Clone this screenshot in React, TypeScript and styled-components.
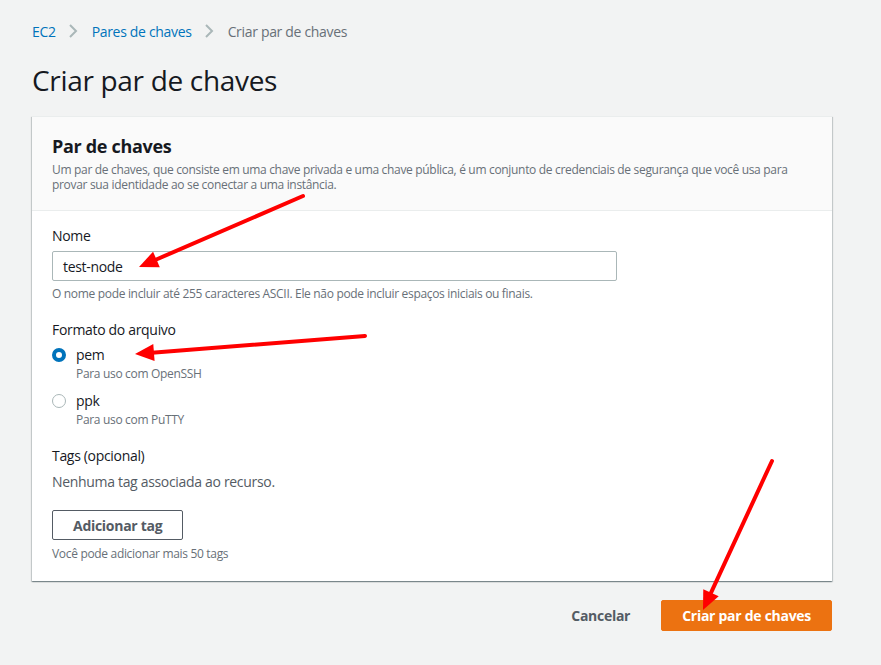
import React from "react";
import styled, { createGlobalStyle } from "styled-components";

const GlobalStyle = createGlobalStyle`
  html, body {
    margin: 0;
    padding: 0;
    background: #f2f3f3;
    font-family: "Open Sans", "Noto Sans", sans-serif;
    letter-spacing: -0.02em;
    color: #16191f;
  }
  * { box-sizing: border-box; }
  button { letter-spacing: -0.02em; }
`;

const Page = styled.div`
  position: relative;
  width: 881px;
  height: 665px;
  padding: 20px 49px 0 32px;
  overflow: hidden;
`;

const Breadcrumbs = styled.nav`
  display: flex;
  align-items: center;
  height: 22px;
  font-size: 14px;
`;

const Crumb = styled.span<{ $current?: boolean }>`
  color: ${(p) => (p.$current ? "#687078" : "#0073bb")};
`;

const Sep = styled.span`
  display: flex;
  align-items: center;
  margin: 0 14px 0 12px;
`;

const Title = styled.h1`
  margin: 20px 0 18px;
  font-size: 28px;
  line-height: 36px;
  font-weight: 400;
  color: #16191f;
`;

const Card = styled.section`
  background: #fff;
  border-top: 1px solid #eaeded;
  box-shadow: 0 1px 1px 0 rgba(0, 28, 36, 0.3), 1px 1px 1px 0 rgba(0, 28, 36, 0.15),
    -1px 1px 1px 0 rgba(0, 28, 36, 0.15);
`;

const CardHeader = styled.header`
  background: #fafafa;
  border-bottom: 1px solid #eaeded;
  padding: 18px 20px 18px;
`;

const CardTitle = styled.h2`
  margin: 0;
  font-size: 18px;
  line-height: 22px;
  font-weight: 700;
`;

const Description = styled.p`
  margin: 5px 0 0;
  font-size: 12px;
  line-height: 15px;
  color: #687078;
`;

const CardBody = styled.div`
  padding: 15px 20px 19px;
  display: flex;
  flex-direction: column;
`;

const Label = styled.div<{ $mt?: number }>`
  font-size: 14px;
  line-height: 20px;
  margin-top: ${(p) => p.$mt ?? 0}px;
`;

const Input = styled.div`
  margin-top: 5px;
  width: 565px;
  height: 30px;
  border: 1px solid #aab7b8;
  border-radius: 2px;
  padding: 0 10px;
  display: flex;
  align-items: center;
  font-size: 14px;
`;

const Hint = styled.div<{ $mt?: number }>`
  margin-top: ${(p) => p.$mt ?? 5}px;
  font-size: 12px;
  line-height: 16px;
  color: #687078;
`;

const RadioRow = styled.div<{ $mt: number }>`
  display: grid;
  grid-template-columns: 24px 1fr;
  margin-top: ${(p) => p.$mt}px;
`;

const RadioCircle = styled.span<{ $checked?: boolean }>`
  width: 14px;
  height: 14px;
  margin-top: 3px;
  border-radius: 50%;
  background: #fff;
  border: ${(p) => (p.$checked ? "4px solid #0073bb" : "1px solid #aab7b8")};
`;

const RadioText = styled.div`
  display: flex;
  flex-direction: column;
`;

const RadioLabel = styled.span`
  font-size: 14px;
  line-height: 20px;
`;

const RadioHint = styled.span`
  margin-top: 1px;
  font-size: 12px;
  line-height: 16px;
  color: #687078;
`;

const Muted = styled.div`
  margin-top: 6px;
  font-size: 14px;
  line-height: 20px;
  color: #545b64;
`;

const SecondaryButton = styled.button`
  align-self: flex-start;
  margin-top: 18px;
  height: 30px;
  padding: 0 20px;
  background: #fff;
  border: 1px solid #545b64;
  border-radius: 2px;
  color: #545b64;
  font-family: inherit;
  font-size: 14px;
  font-weight: 700;
`;

const Footer = styled.div`
  margin-top: 19px;
  display: flex;
  justify-content: flex-end;
  align-items: center;
  gap: 11px;
`;

const LinkButton = styled.button`
  background: none;
  border: none;
  height: 30px;
  padding: 0 20px;
  color: #545b64;
  font-family: inherit;
  font-size: 14px;
  font-weight: 700;
`;

const PrimaryButton = styled.button`
  height: 31px;
  padding: 0 20px;
  background: #ec7211;
  border: 1px solid #ec7211;
  border-radius: 2px;
  color: #fff;
  font-family: inherit;
  font-size: 14px;
  font-weight: 700;
`;

const Overlay = styled.svg`
  position: absolute;
  left: 0;
  top: 0;
  pointer-events: none;
`;

const Chevron = () => (
  <svg width="10" height="14" viewBox="0 0 10 14">
    <path d="M2 1l6 6-6 6" fill="none" stroke="#aab7b8" strokeWidth="2" />
  </svg>
);

type ArrowProps = { x1: number; y1: number; x2: number; y2: number };

const Arrow = ({ x1, y1, x2, y2 }: ArrowProps) => {
  const dx = x2 - x1;
  const dy = y2 - y1;
  const len = Math.hypot(dx, dy);
  const ux = dx / len;
  const uy = dy / len;
  const hl = 19;
  const hw = 8.5;
  const bx = x2 - ux * hl;
  const by = y2 - uy * hl;
  const nx = -uy;
  const ny = ux;
  const pts = `${x2},${y2} ${bx + nx * hw},${by + ny * hw} ${bx - nx * hw},${by - ny * hw}`;
  return (
    <g>
      <line x1={x1} y1={y1} x2={bx + ux * 2} y2={by + uy * 2} stroke="#ff0000" strokeWidth="4" strokeLinecap="round" />
      <polygon points={pts} fill="#ff0000" />
    </g>
  );
};

export default function App() {
  return (
    <Page>
      <GlobalStyle />
      <Breadcrumbs>
        <Crumb>EC2</Crumb>
        <Sep><Chevron /></Sep>
        <Crumb>Pares de chaves</Crumb>
        <Sep><Chevron /></Sep>
        <Crumb $current>Criar par de chaves</Crumb>
      </Breadcrumbs>
      <Title>Criar par de chaves</Title>
      <Card>
        <CardHeader>
          <CardTitle>Par de chaves</CardTitle>
          <Description>
            Um par de chaves, que consiste em uma chave privada e uma chave pública, é um conjunto de credenciais de
            segurança que você usa para provar sua identidade ao se conectar a uma instância.
          </Description>
        </CardHeader>
        <CardBody>
          <Label>Nome</Label>
          <Input>test-node</Input>
          <Hint>O nome pode incluir até 255 caracteres ASCII. Ele não pode incluir espaços iniciais ou finais.</Hint>
          <Label $mt={18}>Formato do arquivo</Label>
          <RadioRow $mt={5}>
            <RadioCircle $checked />
            <RadioText>
              <RadioLabel>pem</RadioLabel>
              <RadioHint>Para uso com OpenSSH</RadioHint>
            </RadioText>
          </RadioRow>
          <RadioRow $mt={9}>
            <RadioCircle />
            <RadioText>
              <RadioLabel>ppk</RadioLabel>
              <RadioHint>Para uso com PuTTY</RadioHint>
            </RadioText>
          </RadioRow>
          <Label $mt={18}>Tags (opcional)</Label>
          <Muted>Nenhuma tag associada ao recurso.</Muted>
          <SecondaryButton>Adicionar tag</SecondaryButton>
          <Hint $mt={6}>Você pode adicionar mais 50 tags</Hint>
        </CardBody>
      </Card>
      <Footer>
        <LinkButton>Cancelar</LinkButton>
        <PrimaryButton>Criar par de chaves</PrimaryButton>
      </Footer>
      <Overlay width="881" height="665" viewBox="0 0 881 665">
        <Arrow x1={303} y1={196} x2={139} y2={267} />
        <Arrow x1={365} y1={336} x2={135} y2={354} />
        <Arrow x1={772} y1={461} x2={703} y2={610} />
      </Overlay>
    </Page>
  );
}
